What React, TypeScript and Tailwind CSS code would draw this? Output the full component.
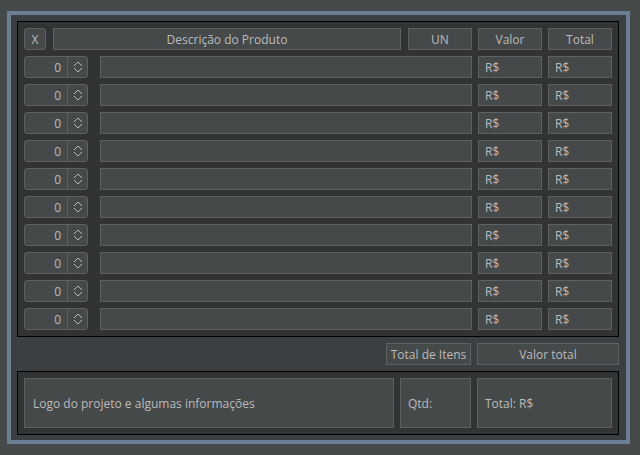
const rows = Array.from({ length: 10 }, (_, i) => i);

const field = "h-[22px] bg-[#45494a] border border-[#5e6162] text-[#bbbbbb]";

function SpinBox() {
  return (
    <div className={`${field} w-[64px] rounded-[3px] flex`}>
      <div className="w-[42px] flex items-center justify-end pr-[6px] pt-px">0</div>
      <div className="flex-1 border-l border-[#5e6162] flex items-center justify-center">
        <svg width="12" height="14" viewBox="0 0 12 14" fill="none" stroke="#bbbbbb" strokeWidth="1">
          <path d="M2 6 L6 2 L10 6" />
          <path d="M2 8 L6 12 L10 8" />
        </svg>
      </div>
    </div>
  );
}

export default function App() {
  return (
    <div
      className="w-[640px] h-[455px] bg-[#45494a] pl-[7px] pt-[11px] text-[12px] leading-none text-[#bbbbbb]"
      style={{ fontFamily: '"Open Sans", "Noto Sans", sans-serif' }}
    >
      <div className="w-[623px] h-[433px] border-4 border-[#6a7f93] bg-[#3c3f41] pl-[6px] pt-[6px]">
        {/* tabela */}
        <div className="w-[602px] border border-black bg-[#313335] p-[6px] flex flex-col gap-[6px]">
          <div className="flex">
            <div className={`${field} w-[22px] rounded-[3px] flex items-center justify-center pt-px`}>X</div>
            <div className={`${field} w-[348px] ml-[7px] flex items-center justify-center pt-px`}>Descrição do Produto</div>
            <div className={`${field} w-[64px] ml-[7px] flex items-center justify-center pt-px`}>UN</div>
            <div className={`${field} w-[64px] ml-[6px] flex items-center justify-center pt-px`}>Valor</div>
            <div className={`${field} w-[64px] ml-[6px] flex items-center justify-center pt-px`}>Total</div>
          </div>
          {rows.map((r) => (
            <div key={r} className="flex">
              <SpinBox />
              <div className={`${field} w-[372px] ml-[12px]`} />
              <div className={`${field} w-[64px] ml-[6px] flex items-center pl-[6px] pt-px`}>R$</div>
              <div className={`${field} w-[64px] ml-[6px] flex items-center pl-[6px] pt-px`}>R$</div>
            </div>
          ))}
        </div>

        {/* totais */}
        <div className="w-[602px] flex justify-end gap-[6px] mt-[6px]">
          <div className={`${field} w-[85px] flex items-center justify-center pt-px`}>Total de Itens</div>
          <div className={`${field} w-[142px] flex items-center justify-center pt-px`}>Valor total</div>
        </div>

        {/* rodapé */}
        <div className="w-[602px] mt-[6px] border border-black bg-[#313335] p-[6px] flex gap-[6px]">
          <div className={`${field} h-[50px] w-[370px] flex items-center pl-[8px] pt-px`}>Logo do projeto e algumas informações</div>
          <div className={`${field} h-[50px] w-[71px] flex items-center pl-[7px] pt-px`}>Qtd:</div>
          <div className={`${field} h-[50px] w-[135px] flex items-center pl-[7px] pt-px`}>Total: R$</div>
        </div>
      </div>
    </div>
  );
}
